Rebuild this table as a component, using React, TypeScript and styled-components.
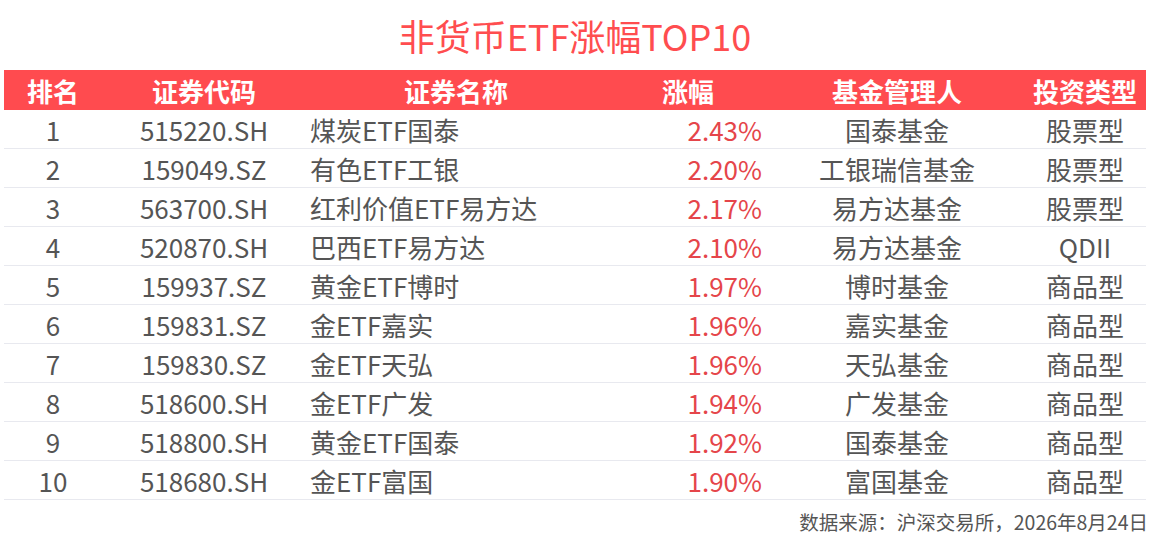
import React from "react";
import styled, { createGlobalStyle } from "styled-components";

type Row = {
  rank: number;
  code: string;
  name: string;
  change: string;
  manager: string;
  type: string;
};

const rows: Row[] = [
  { rank: 1, code: "515220.SH", name: "煤炭ETF国泰", change: "2.43%", manager: "国泰基金", type: "股票型" },
  { rank: 2, code: "159049.SZ", name: "有色ETF工银", change: "2.20%", manager: "工银瑞信基金", type: "股票型" },
  { rank: 3, code: "563700.SH", name: "红利价值ETF易方达", change: "2.17%", manager: "易方达基金", type: "股票型" },
  { rank: 4, code: "520870.SH", name: "巴西ETF易方达", change: "2.10%", manager: "易方达基金", type: "QDII" },
  { rank: 5, code: "159937.SZ", name: "黄金ETF博时", change: "1.97%", manager: "博时基金", type: "商品型" },
  { rank: 6, code: "159831.SZ", name: "金ETF嘉实", change: "1.96%", manager: "嘉实基金", type: "商品型" },
  { rank: 7, code: "159830.SZ", name: "金ETF天弘", change: "1.96%", manager: "天弘基金", type: "商品型" },
  { rank: 8, code: "518600.SH", name: "金ETF广发", change: "1.94%", manager: "广发基金", type: "商品型" },
  { rank: 9, code: "518800.SH", name: "黄金ETF国泰", change: "1.92%", manager: "国泰基金", type: "商品型" },
  { rank: 10, code: "518680.SH", name: "金ETF富国", change: "1.90%", manager: "富国基金", type: "商品型" },
];

const App: React.FC = () => {
  return (
    <>
      <GlobalStyle />
      <Page>
        <Title>非货币ETF涨幅TOP10</Title>
        <Table>
          <HeaderRow>
            <HeadCell>排名</HeadCell>
            <HeadCell>证券代码</HeadCell>
            <HeadCell>证券名称</HeadCell>
            <HeadCell>涨幅</HeadCell>
            <HeadCell>基金管理人</HeadCell>
            <HeadCell>投资类型</HeadCell>
          </HeaderRow>
          {rows.map((r) => (
            <BodyRow key={r.rank}>
              <Cell>{r.rank}</Cell>
              <Cell>{r.code}</Cell>
              <Cell align="left">{r.name}</Cell>
              <Cell align="right" highlight>
                {r.change}
              </Cell>
              <Cell>{r.manager}</Cell>
              <Cell>{r.type}</Cell>
            </BodyRow>
          ))}
        </Table>
        <Source>数据来源：沪深交易所，2026年8月24日</Source>
      </Page>
    </>
  );
};

export default App;

const GlobalStyle = createGlobalStyle`
  html, body {
    margin: 0;
    padding: 0;
    background: #ffffff;
  }
  body {
    font-family: "Noto Sans CJK SC", "Noto Sans", sans-serif;
  }
`;

const Page = styled.div`
  width: 1150px;
  height: 540px;
  display: flex;
  flex-direction: column;
  padding: 0 4px;
  box-sizing: border-box;
`;

const Title = styled.h1`
  margin: 0;
  height: 70px;
  display: flex;
  align-items: center;
  justify-content: center;
  font-size: 36px;
  font-weight: 400;
  color: #ff4d4f;
`;

const Table = styled.div`
  display: flex;
  flex-direction: column;
`;

const columns = "98px 204px 300px 164px 254px 122px";

const HeaderRow = styled.div`
  display: grid;
  grid-template-columns: ${columns};
  height: 40px;
  background: #ff4b4f;
`;

const HeadCell = styled.div`
  display: flex;
  align-items: center;
  justify-content: center;
  color: #ffffff;
  font-size: 26px;
  font-weight: 700;
`;

const BodyRow = styled.div`
  display: grid;
  grid-template-columns: ${columns};
  height: 39px;
  box-sizing: border-box;
  border-bottom: 1px solid #e8e9ef;
`;

const Cell = styled.div<{ align?: "left" | "right"; highlight?: boolean }>`
  display: flex;
  align-items: center;
  justify-content: ${(p) =>
    p.align === "left" ? "flex-start" : p.align === "right" ? "flex-end" : "center"};
  padding: ${(p) =>
    p.align === "left" ? "0 0 0 4px" : p.align === "right" ? "0 8px 0 0" : "0"};
  font-size: 26px;
  color: ${(p) => (p.highlight ? "#e5454a" : "#555555")};
  white-space: nowrap;
`;

const Source = styled.div`
  margin-top: 7px;
  margin-right: -2px;
  text-align: right;
  font-size: 19.5px;
  color: #555555;
`;
